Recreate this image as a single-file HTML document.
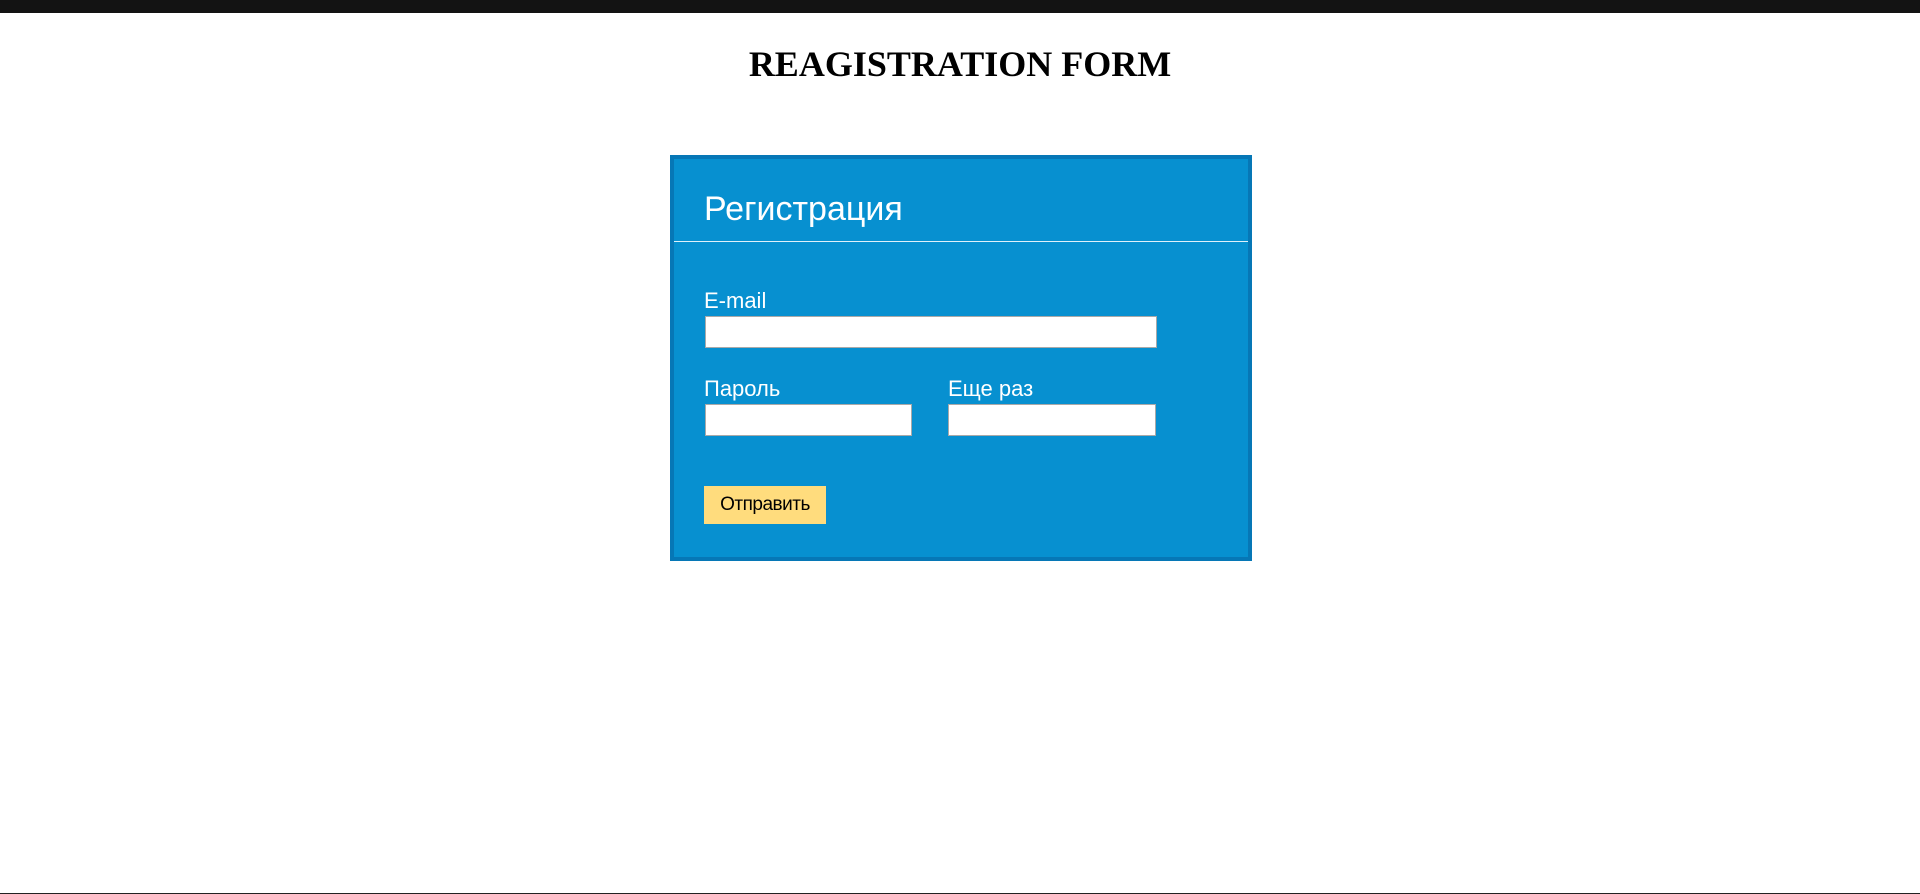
<!DOCTYPE html>
<html><head><meta charset="utf-8"><style>
*{margin:0;padding:0;box-sizing:border-box}
body{width:1920px;height:894px;background:#fff;position:relative;overflow:hidden;font-family:"Liberation Sans",sans-serif}
.top{position:absolute;left:0;top:0;width:1920px;height:13px;background:#131313}
.bot{position:absolute;left:0;top:893px;width:1920px;height:1px;background:#222}
h1{position:absolute;left:0;width:1920px;top:43px;text-align:center;font-family:"Liberation Serif",serif;font-size:36px;font-weight:bold;line-height:42px;color:#000}
.box{position:absolute;left:670px;top:155px;width:582px;height:406px;background:#0790d0;border:4px solid #0677b6}
.t{position:absolute;color:#fff;white-space:nowrap}
.hr{position:absolute;left:674px;top:241px;width:574px;height:1px;background:#dff1fb}
.in{position:absolute;background:#fff;border:1px solid #a9a9a9}
.btn{position:absolute;left:704px;top:486px;width:122px;height:38px;background:#ffdc7d;color:#000;font-size:19px;line-height:38px;text-align:center;letter-spacing:-0.5px}
</style></head><body>
<div class="top"></div>
<h1>REAGISTRATION FORM</h1>
<div class="box"></div>
<div class="t" style="left:704px;top:189px;font-size:34px;line-height:40px">Регистрация</div>
<div class="hr"></div>
<div class="t" style="left:704px;top:288px;font-size:22px;line-height:26px">E-mail</div>
<div class="in" style="left:705px;top:316px;width:452px;height:32px"></div>
<div class="t" style="left:704px;top:376px;font-size:22px;line-height:26px">Пароль</div>
<div class="t" style="left:948px;top:376px;font-size:22px;line-height:26px">Еще раз</div>
<div class="in" style="left:705px;top:404px;width:207px;height:32px"></div>
<div class="in" style="left:948px;top:404px;width:208px;height:32px"></div>
<div class="btn">Отправить</div>
<div class="bot"></div>
</body></html>
